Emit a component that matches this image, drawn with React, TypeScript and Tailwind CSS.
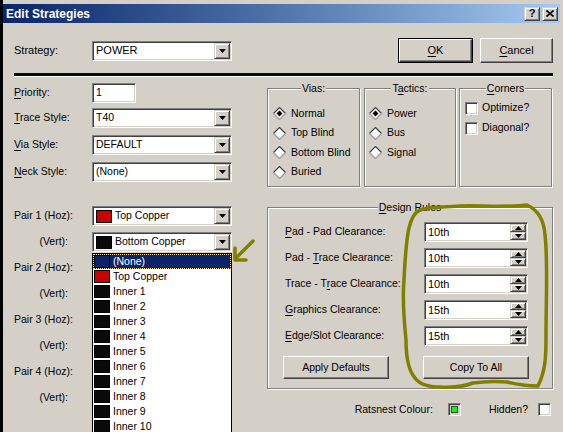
import React from "react";

const SUNKEN =
  "border border-t-[#808080] border-l-[#808080] border-r-white border-b-white shadow-[inset_1px_1px_0_#404040,inset_-1px_-1px_0_#d4d0c8]";
const RAISED =
  "border border-t-white border-l-white border-r-[#404040] border-b-[#404040] shadow-[inset_-1px_-1px_0_#808080]";
const RAISED_SMALL =
  "border border-t-[#d4d0c8] border-l-[#d4d0c8] border-r-[#404040] border-b-[#404040] shadow-[inset_1px_1px_0_white,inset_-1px_-1px_0_#808080]";

function DownArrow() {
  return (
    <svg width="7" height="4" viewBox="0 0 7 4">
      <path d="M0 0H7L3.5 4Z" fill="black" />
    </svg>
  );
}

function Combo({ children }: { children?: React.ReactNode }) {
  return (
    <div className={`w-[140px] h-[20px] flex bg-white p-[1px] ${SUNKEN}`}>
      <div className="flex-1 flex items-center pl-[2px] overflow-hidden whitespace-nowrap">{children}</div>
      <div className={`w-[16px] h-full flex items-center justify-center bg-[#d4d0c8] ${RAISED_SMALL}`}>
        <DownArrow />
      </div>
    </div>
  );
}

function Swatch({ color }: { color: string }) {
  return <span className="inline-block w-[16px] h-[13px] border border-black mr-[3px] shrink-0" style={{ background: color }} />;
}

function Label({ children, right }: { children: React.ReactNode; right?: boolean }) {
  return <div className={`w-[78px] shrink-0 ${right ? "text-right pr-[24px]" : ""}`}>{children}</div>;
}

function U({ children }: { children: React.ReactNode }) {
  return <span className="underline underline-offset-[2px]">{children}</span>;
}

function Diamond({ checked }: { checked?: boolean }) {
  return (
    <svg width="13" height="13" viewBox="0 0 13 13" className="shrink-0">
      <polygon points="6.5,0.5 12.5,6.5 6.5,12.5 0.5,6.5" fill="white" />
      <polyline points="0.5,6.5 6.5,0.5 12.5,6.5" fill="none" stroke="#404040" strokeWidth="1.2" />
      <polyline points="0.5,6.5 6.5,12.5 12.5,6.5" fill="none" stroke="#9a9a9a" strokeWidth="1.2" />
      {checked && <polygon points="6.5,3.5 9.5,6.5 6.5,9.5 3.5,6.5" fill="black" />}
    </svg>
  );
}

function Radio({ label, checked }: { label: string; checked?: boolean }) {
  return (
    <div className="h-[19.5px] flex items-center">
      <Diamond checked={checked} />
      <span className="ml-[5px]">{label}</span>
    </div>
  );
}

function Check({ label }: { label?: string }) {
  return (
    <div className="h-[20px] flex items-center">
      <div className={`w-[13px] h-[13px] bg-white ${SUNKEN}`} />
      {label && <span className="ml-[4px]">{label}</span>}
    </div>
  );
}

function Group({ title, className, children }: { title: React.ReactNode; className: string; children: React.ReactNode }) {
  return (
    <div className={`relative border border-[#808080] shadow-[inset_1px_1px_0_white,1px_1px_0_white] ${className}`}>
      <div className="absolute -top-[8px] left-0 right-0 flex justify-center">
        <span className="bg-[#d4d0c8] px-[1px] leading-[14px]">{title}</span>
      </div>
      {children}
    </div>
  );
}

function Spin({ value }: { value: string }) {
  return (
    <div className={`w-[104px] h-[20px] flex bg-white p-[1px] ${SUNKEN}`}>
      <div className="flex-1 flex items-center pl-[2px] text-[11px]">{value}</div>
      <div className="w-[16px] h-full flex flex-col">
        <div className={`flex-1 flex items-center justify-center bg-[#d4d0c8] ${RAISED_SMALL}`}>
          <svg width="7" height="4" viewBox="0 0 7 4">
            <path d="M0 4H7L3.5 0Z" fill="black" />
          </svg>
        </div>
        <div className={`flex-1 flex items-center justify-center bg-[#d4d0c8] ${RAISED_SMALL}`}>
          <DownArrow />
        </div>
      </div>
    </div>
  );
}

function Button({ children, className }: { children: React.ReactNode; className: string }) {
  return <div className={`flex items-center justify-center bg-[#d4d0c8] ${RAISED} ${className}`}>{children}</div>;
}

const rules: [React.ReactNode, string][] = [
  [<><U>P</U>ad - Pad Clearance:</>, "10th"],
  [<>Pad - <U>T</U>race Clearance:</>, "10th"],
  [<>Trace - T<U>r</U>ace Clearance:</>, "10th"],
  [<><U>G</U>raphics Clearance:</>, "15th"],
  [<><U>E</U>dge/Slot Clearance:</>, "15th"],
];

const listItems: [string, string][] = [
  ["(None)", "#0a246a"],
  ["Top Copper", "#cc0000"],
  ...Array.from({ length: 10 }, (_, i) => [`Inner ${i + 1}`, "#0a0a0a"] as [string, string]),
];

export default function App() {
  return (
    <div className="w-[563px] h-[432px] bg-[#d4d0c8] relative overflow-hidden text-[10.5px] text-black font-['Liberation_Sans',Arial,sans-serif] border-l-[3px] border-l-black">
      {/* Title bar */}
      <div className="mt-[4px] mr-[3px] h-[19px] flex items-center bg-gradient-to-r from-[#0a246a] to-[#a6caf0] pl-[3px] pr-[2px]">
        <span className="text-white font-bold text-[12px] flex-1">Edit Strategies</span>
        <div className={`w-[16px] h-[14px] flex items-center justify-center bg-[#d4d0c8] ${RAISED_SMALL} font-bold text-[11px] leading-none`}>?</div>
        <div className={`ml-[2px] w-[16px] h-[14px] flex items-center justify-center bg-[#d4d0c8] ${RAISED_SMALL}`}>
          <svg width="8" height="7" viewBox="0 0 8 7">
            <path d="M0.5 0.5L7.5 6.5M7.5 0.5L0.5 6.5" stroke="black" strokeWidth="1.6" />
          </svg>
        </div>
      </div>

      {/* Strategy row */}
      <div className="mt-[15px] ml-[11px] mr-[10px] h-[25px] flex items-center text-[11px]">
        <Label>Strategy:</Label>
        <Combo>POWER</Combo>
        <div className="flex-1" />
        <div className="w-[75px] h-[25px] border border-black">
          <Button className="w-full h-full">
            <U>O</U>K
          </Button>
        </div>
        <Button className="ml-[7px] w-[73px] h-[25px]">
          <U>C</U>ancel
        </Button>
      </div>

      {/* Separator */}
      <div className="mt-[10px] ml-[11px] w-[539px] h-[4px] bg-[#0a0a0a] border-b border-white" />

      {/* Body */}
      <div className="flex ml-[11px]">
        {/* Left column */}
        <div className="w-[218px] flex flex-col">
          <div className="mt-[6px] h-[20px] flex items-center">
            <Label>
              <U>P</U>riority:
            </Label>
            <div className={`w-[44px] h-[20px] bg-white flex items-center pl-[3px] ${SUNKEN}`}>1</div>
          </div>
          <div className="mt-[5px] flex items-center">
            <Label>
              <U>T</U>race Style:
            </Label>
            <Combo>T40</Combo>
          </div>
          <div className="mt-[7px] flex items-center">
            <Label>
              <U>V</U>ia Style:
            </Label>
            <Combo>DEFAULT</Combo>
          </div>
          <div className="mt-[7px] flex items-center">
            <Label>
              <U>N</U>eck Style:
            </Label>
            <Combo>(None)</Combo>
          </div>
          <div className="mt-[24px] flex items-center">
            <Label>Pair 1 (Hoz):</Label>
            <Combo>
              <Swatch color="#cc0000" />
              Top Copper
            </Combo>
          </div>
          <div className="mt-[6px] flex items-center">
            <Label right>(Vert):</Label>
            <Combo>
              <Swatch color="#0a0a0a" />
              Bottom Copper
            </Combo>
          </div>
          {[2, 3, 4].map((n) => (
            <React.Fragment key={n}>
              <div className="mt-[6px] flex items-center">
                <Label>Pair {n} (Hoz):</Label>
                <Combo />
              </div>
              <div className="mt-[6px] flex items-center">
                <Label right>(Vert):</Label>
                <Combo />
              </div>
            </React.Fragment>
          ))}
        </div>

        {/* Right column */}
        <div className="ml-[35px] w-[286px] flex flex-col">
          <div className="mt-[11px] flex">
            <Group title="Vias:" className="w-[93px] h-[99px] pt-[15px] pl-[5px]">
              <Radio label="Normal" checked />
              <Radio label="Top Blind" />
              <Radio label="Bottom Blind" />
              <Radio label="Buried" />
            </Group>
            <Group
              title={
                <>
                  T<U>a</U>ctics:
                </>
              }
              className="ml-[4px] w-[92px] h-[99px] pt-[15px] pl-[4px]"
            >
              <Radio label="Power" checked />
              <Radio label="Bus" />
              <Radio label="Signal" />
            </Group>
            <Group
              title={
                <>
                  <U>C</U>orners
                </>
              }
              className="ml-[3px] w-[93px] h-[99px] pt-[9px] pl-[5px]"
            >
              <Check label="Optimize?" />
              <Check label="Diagonal?" />
            </Group>
          </div>

          <Group
            title={
              <>
                <U>D</U>esign Rules
              </>
            }
            className="mt-[20px] w-[286px] h-[182px] pt-[14px]"
          >
            {rules.map(([label, value], i) => (
              <div key={i} className={`flex items-center h-[20px] ${i > 0 ? "mt-[6px]" : ""}`}>
                <div className="w-[156px] pl-[17px]">{label}</div>
                <Spin value={value} />
              </div>
            ))}
            <div className="mt-[10px] flex">
              <Button className="ml-[15px] w-[106px] h-[23px]">Apply Defaults</Button>
              <Button className="ml-[34px] w-[106px] h-[23px]">Copy To All</Button>
            </div>
          </Group>

          <div className="mt-[14px] h-[13px] flex items-center justify-end pr-[2px]">
            <span>Ratsnest Colour:</span>
            <div className={`ml-[15px] w-[13px] h-[13px] p-[2px] bg-[#d4d0c8] ${SUNKEN}`}>
              <div className="w-full h-full bg-[#00ff00] border border-[#404040]" />
            </div>
            <span className="ml-[28px]">Hidden?</span>
            <div className={`ml-[10px] w-[13px] h-[13px] bg-white ${SUNKEN}`} />
          </div>
        </div>
      </div>

      {/* Open drop-down list */}
      <div className="absolute left-[89px] top-[253px] w-[140px] h-[190px] bg-white border border-black">
        {listItems.map(([name, color], i) => (
          <div
            key={name}
            className={`h-[15px] flex items-center pl-[1px] ${
              i === 0 ? "bg-[#0a246a] text-white outline-1 outline-dotted -outline-offset-1 outline-[#f5db95]" : ""
            }`}
          >
            <Swatch color={color} />
            <span>{name}</span>
          </div>
        ))}
      </div>

      {/* Hand-drawn annotation */}
      <svg className="absolute -left-[3px] top-0 pointer-events-none" width="563" height="432" viewBox="0 0 563 432">
        <path
          d="M 417 212 C 425 206, 440 208, 460 206 C 480 205, 500 208, 527 205 C 538 210, 544 220, 545 235 C 548 260, 546 300, 546 335 C 546 355, 546 370, 538 386 C 525 386, 515 384, 507 382 C 495 381, 480 382, 473 383 C 465 386, 455 388, 440 387 C 430 387, 420 385, 415 378 C 408 370, 406 355, 406 340 C 404 320, 402 300, 404 280 C 405 260, 406 240, 409 228 C 411 220, 413 215, 417 212 Z"
          fill="none"
          stroke="#808000"
          strokeWidth="3.5"
          strokeLinejoin="round"
        />
        <path d="M 253 241 L 236 258 M 235 248 L 235 260 L 246 260" fill="none" stroke="#808000" strokeWidth="3.5" strokeLinecap="round" strokeLinejoin="round" />
      </svg>
    </div>
  );
}
